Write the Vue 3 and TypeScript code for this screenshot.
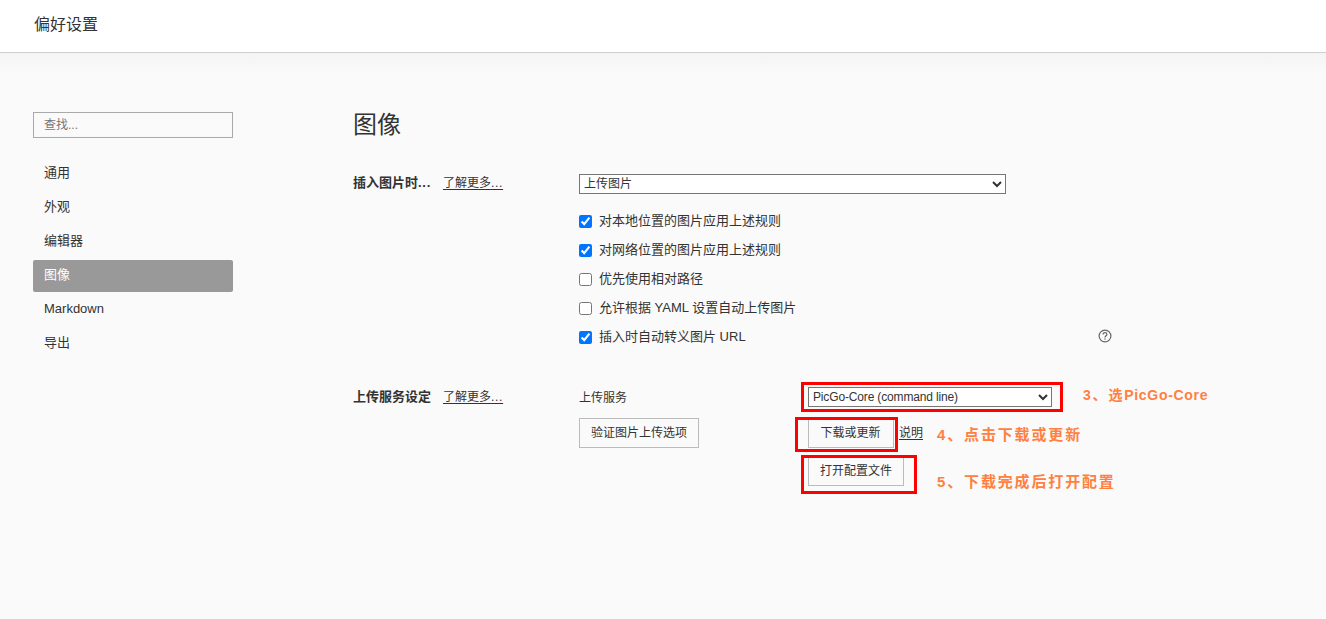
<script setup lang="ts">
import { ref } from 'vue'

interface Option {
  label: string
  checked: boolean
}

const sections = ['通用', '外观', '编辑器', '图像', 'Markdown', '导出']
const active = ref('图像')
const options = ref<Option[]>([
  { label: '对本地位置的图片应用上述规则', checked: true },
  { label: '对网络位置的图片应用上述规则', checked: true },
  { label: '优先使用相对路径', checked: false },
  { label: '允许根据 YAML 设置自动上传图片', checked: false },
  { label: '插入时自动转义图片 URL', checked: true },
])
</script>

<template>
  <div class="page">
    <header class="header">偏好设置</header>
    <div class="body">
      <aside class="sidebar">
        <input class="search" type="text" placeholder="查找..." />
        <nav class="nav">
          <a
            v-for="s in sections"
            :key="s"
            class="nav-item"
            :class="{ active: s === active }"
            @click="active = s"
          >{{ s }}</a>
        </nav>
      </aside>
      <main class="content">
        <h2 class="title">图像</h2>
        <section class="group insert">
          <div class="group-label"><strong>插入图片时<span class="dots">...</span></strong><a class="more">了解更多<span class="dots">...</span></a></div>
          <div class="insert-fields">
            <select class="select wide"><option>上传图片</option></select>
            <div class="checks">
              <label v-for="o in options" :key="o.label" class="check">
                <input v-model="o.checked" type="checkbox" /><span>{{ o.label }}</span>
              </label>
            </div>
          </div>
          <svg class="help" viewBox="0 0 14 14" width="14" height="14">
            <circle cx="7" cy="7" r="5.9" fill="none" stroke="#666" stroke-width="1.2" />
            <path d="M5.1 5.6C5.1 4.4 5.9 3.7 7 3.7s1.9.7 1.9 1.7C8.9 6.7 7 6.8 7 8.5" fill="none" stroke="#666" stroke-width="1.2" />
            <rect x="6.4" y="9.3" width="1.2" height="1.3" fill="#666" />
          </svg>
        </section>
        <section class="group upload">
          <div class="group-label"><strong>上传服务设定</strong><a class="more">了解更多<span class="dots">...</span></a></div>
          <div class="service">
            <span class="service-label">上传服务</span>
            <button class="btn verify">验证图片上传选项</button>
          </div>
          <div class="service-fields">
            <select class="select core"><option>PicGo-Core (command line)</option></select>
            <div class="download"><button class="btn update">下载或更新</button><a class="doc">说明</a></div>
            <button class="btn config">打开配置文件</button>
          </div>
        </section>
      </main>
    </div>
    <div class="frame frame-core"></div>
    <div class="frame frame-update"></div>
    <div class="frame frame-config"></div>
    <div class="note note-core">3、选<span class="latin">PicGo-Core</span></div>
    <div class="note note-update">4、点击下载或更新</div>
    <div class="note note-config">5、下载完成后打开配置</div>
  </div>
</template>

<style>
body {
  background: #fafafa;
}
</style>

<style scoped>
.page {
  position: relative;
  height: 619px;
  overflow: hidden;
  background: #fafafa;
  color: #333;
  font: 13px/18px "Liberation Sans", "Noto Sans CJK SC", sans-serif;
}
.page * {
  box-sizing: border-box;
}
.header {
  height: 53px;
  padding-left: 34px;
  background: #fff;
  border-bottom: 1px solid #d0d0d0;
  font-size: 16px;
  line-height: 49px;
}
.body {
  display: flex;
  height: 566px;
  padding: 59px 0 0 33px;
  background: linear-gradient(#f4f4f4, #fafafa 20px);
}
.sidebar {
  width: 200px;
  margin-right: 120px;
}
.search {
  display: block;
  width: 200px;
  height: 26px;
  padding: 0 10px;
  border: 1px solid #aaa;
  background: transparent;
  font: 12px "Liberation Sans", "Noto Sans CJK SC", sans-serif;
}
.nav {
  display: flex;
  flex-direction: column;
  gap: 2px;
  margin-top: 20px;
}
.nav-item {
  height: 32px;
  padding-left: 11px;
  border-radius: 2px;
  line-height: 30px;
}
.nav-item.active {
  background: #999;
  color: #fff;
}
.title {
  height: 62px;
  margin: 0;
  font-size: 24px;
  font-weight: 400;
  line-height: 26px;
}
.group {
  display: flex;
}
.insert {
  height: 213px;
}
.group-label {
  width: 226px;
  white-space: nowrap;
}
.upload .group-label {
  padding-top: 1px;
}
.group-label strong {
  font-size: 13px;
}
.dots {
  letter-spacing: 0.7px;
}
.more {
  margin-left: 12px;
  font-size: 12px;
  text-decoration: underline;
  text-underline-offset: 2px;
}
.insert-fields {
  width: 427px;
}
.select {
  display: block;
  height: 20px;
  padding: 0 1px 0 0;
  margin: 0;
  border: 1px solid #767676;
  border-radius: 0;
  background-color: #fff;
  color: #333;
  font: 12px "Liberation Sans", "Noto Sans CJK SC", sans-serif;
}
.wide {
  width: 427px;
}
.checks {
  padding-top: 12px;
}
.check {
  display: flex;
  align-items: center;
  height: 29px;
}
.check input {
  width: 13px;
  height: 13px;
  margin: 2px 7px 0 0;
}
.help {
  margin: 155px 0 0 92px;
}
.service {
  width: 229px;
  font-size: 12px;
}
.service-label {
  display: block;
  height: 31px;
  line-height: 22px;
}
.btn {
  display: block;
  height: 30px;
  padding: 0 0 3px;
  border: 1px solid #bbb;
  background: transparent;
  color: #333;
  font: 12px "Liberation Sans", "Noto Sans CJK SC", sans-serif;
}
.verify {
  width: 120px;
}
.core {
  width: 244px;
  letter-spacing: -0.15px;
}
.download {
  display: flex;
  margin-top: 11px;
}
.update {
  width: 86px;
  padding-right: 1px;
}
.doc {
  margin-left: 5px;
  font-size: 12px;
  line-height: 30px;
  text-decoration: underline;
  text-underline-offset: 2px;
}
.config {
  width: 96px;
  margin-top: 8px;
}
.frame {
  position: absolute;
  border: 3px solid #f00;
}
.frame-core {
  left: 801px;
  top: 382px;
  width: 262px;
  height: 30px;
}
.frame-update {
  left: 795px;
  top: 417px;
  width: 103px;
  height: 35px;
}
.frame-config {
  left: 801px;
  top: 455px;
  width: 116px;
  height: 39px;
}
.note {
  position: absolute;
  color: #ff8040;
  font-size: 15px;
  font-weight: 700;
  line-height: 20px;
  letter-spacing: 1.85px;
  white-space: nowrap;
}
.note-core {
  left: 1083px;
  top: 385px;
  font-size: 14px;
  letter-spacing: 1.8px;
}
.latin {
  letter-spacing: 0.7px;
}
.note-update {
  left: 937px;
  top: 425px;
}
.note-config {
  left: 937px;
  top: 472px;
}
</style>
